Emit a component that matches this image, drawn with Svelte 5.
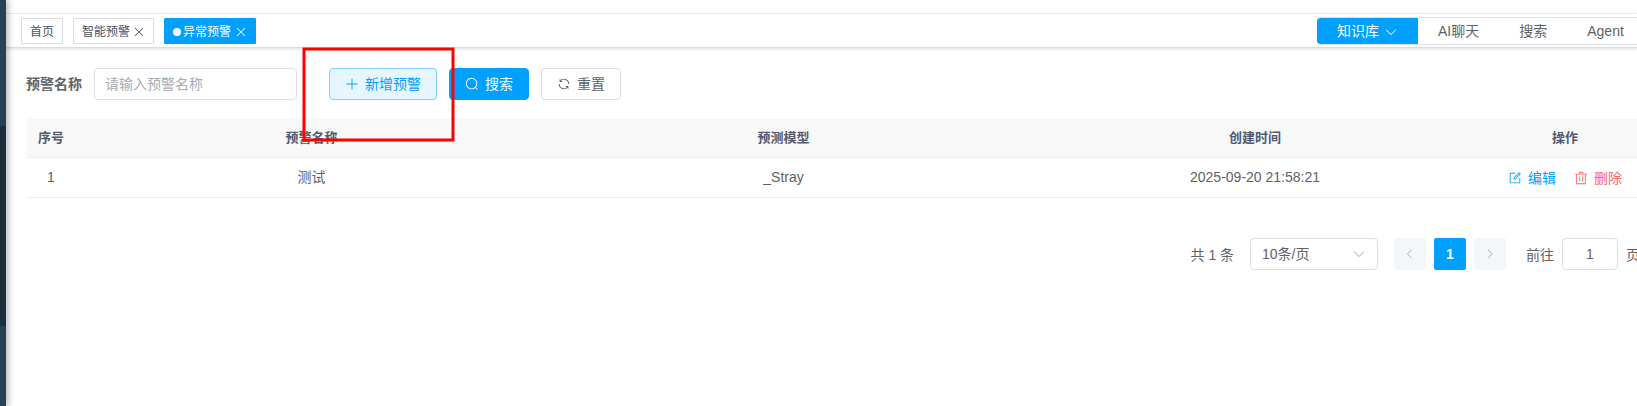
<script>
  const icons = {
    plus: 'M480 480V128a32 32 0 0 1 64 0v352h352a32 32 0 1 1 0 64H544v352a32 32 0 1 1-64 0V544H128a32 32 0 0 1 0-64z',
    search: 'm795.904 750.72 124.992 124.928a32 32 0 0 1-45.248 45.248L750.656 795.904a416 416 0 1 1 45.248-45.248zM480 832a352 352 0 1 0 0-704 352 352 0 0 0 0 704z',
    refresh: 'M771.776 794.88A384 384 0 0 1 128 512h64a320 320 0 0 0 555.712 216.448H654.72a32 32 0 1 1 0-64h149.056a32 32 0 0 1 32 32v148.928a32 32 0 1 1-64 0v-50.56zM276.288 295.616h92.992a32 32 0 0 1 0 64H220.16a32 32 0 0 1-32-32V178.56a32 32 0 0 1 64 0v50.56A384 384 0 0 1 896.128 512h-64a320 320 0 0 0-555.776-216.384z',
    down: 'M831.872 340.864 512 652.672 192.128 340.864a30.592 30.592 0 0 0-42.752 0 29.12 29.12 0 0 0 0 41.6L489.664 714.24a32 32 0 0 0 44.672 0l340.288-331.712a29.12 29.12 0 0 0 0-41.728 30.592 30.592 0 0 0-42.752 0z',
    left: 'M609.408 149.376 277.76 489.6a32 32 0 0 0 0 44.672l331.648 340.352a29.12 29.12 0 0 0 41.728 0 30.592 30.592 0 0 0 0-42.752L339.264 511.936l311.872-319.872a30.592 30.592 0 0 0 0-42.688 29.12 29.12 0 0 0-41.728 0z',
    right: 'M340.864 149.312a30.592 30.592 0 0 0 0 42.752L652.736 512 340.864 831.872a30.592 30.592 0 0 0 0 42.752 29.12 29.12 0 0 0 41.728 0L714.24 534.336a32 32 0 0 0 0-44.672L382.592 149.376a29.12 29.12 0 0 0-41.728 0z',
    close: 'M764.288 214.592 512 466.88 259.712 214.592a31.936 31.936 0 0 0-45.12 45.12L466.752 512 214.528 764.224a31.936 31.936 0 1 0 45.12 45.184L512 557.184l252.288 252.288a31.936 31.936 0 0 0 45.12-45.12L557.12 512.064l252.288-252.352a31.936 31.936 0 1 0-45.12-45.184z',
    trash: 'M160 256H96a32 32 0 0 1 0-64h256V95.936a32 32 0 0 1 32-32h256a32 32 0 0 1 32 32V192h256a32 32 0 1 1 0 64h-64v672a32 32 0 0 1-32 32H192a32 32 0 0 1-32-32V256zm448-64v-64H416v64h192zM224 896h576V256H224v640zm192-128a32 32 0 0 1-32-32V416a32 32 0 0 1 64 0v320a32 32 0 0 1-32 32zm192 0a32 32 0 0 1-32-32V416a32 32 0 0 1 64 0v320a32 32 0 0 1-32 32z',
    edit: 'M832 512a32 32 0 1 1 64 0v352a32 32 0 0 1-32 32H160a32 32 0 0 1-32-32V160a32 32 0 0 1 32-32h352a32 32 0 0 1 0 64H192v640h640V512zM469.952 554.24l52.8-7.552L847.104 222.4a32 32 0 1 0-45.248-45.248L477.44 501.44l-7.552 52.8zm422.4-422.4a96 96 0 0 1 0 135.808l-331.84 331.84a32 32 0 0 1-18.112 9.088L436.8 623.68a32 32 0 0 1-36.224-36.224l15.104-105.6a32 32 0 0 1 9.024-18.112l331.904-331.84a96 96 0 0 1 135.744 0z'
  };

  const rows = [{ index: 1, name: '测试', model: '_Stray', created: '2025-09-20 21:58:21' }];
  const links = ['AI聊天', '搜索', 'Agent'];
</script>

{#snippet icon(name)}
  <svg class="icon" viewBox="0 0 1024 1024" aria-hidden="true"><path d={icons[name]} /></svg>
{/snippet}

<div class="app">
  <aside class="sidebar"><div class="submenu"></div></aside>
  <div class="main">
    <div class="navbar"></div>
    <header class="tabs-bar">
      <nav class="tabs">
        <span class="tab">首页</span>
        <span class="tab">智能预警{@render icon('close')}</span>
        <span class="tab active"><i class="dot"></i>异常预警{@render icon('close')}</span>
      </nav>
      <nav class="links">
        <span class="link current">知识库{@render icon('down')}</span>
        {#each links as link}
          <span class="link">{link}</span>
        {/each}
      </nav>
    </header>

    <main class="content">
      <form class="filters">
        <label for="name">预警名称</label>
        <input id="name" class="field" placeholder="请输入预警名称" />
        <button type="button" class="btn plain">{@render icon('plus')}<span>新增预警</span></button>
        <button type="button" class="btn primary">{@render icon('search')}<span>搜索</span></button>
        <button type="button" class="btn">{@render icon('refresh')}<span>重置</span></button>
      </form>

      <div class="table">
        <div class="row head">
          <span>序号</span><span>预警名称</span><span>预测模型</span><span>创建时间</span><span>操作</span>
        </div>
        {#each rows as row}
          <div class="row">
            <span>{row.index}</span><span>{row.name}</span><span>{row.model}</span><span>{row.created}</span>
            <span class="actions">
              <a class="edit">{@render icon('edit')}编辑</a>
              <a class="delete">{@render icon('trash')}删除</a>
            </span>
          </div>
        {/each}
      </div>

      <div class="pagination">
        <span class="total">共 1 条</span>
        <div class="select"><span>10条/页</span>{@render icon('down')}</div>
        <div class="pager">
          <span class="page off">{@render icon('left')}</span>
          <span class="page on">1</span>
          <span class="page off">{@render icon('right')}</span>
        </div>
        <span class="goto">前往</span>
        <div class="jump">1</div>
        <span class="unit">页</span>
      </div>
    </main>
  </div>
  <svg class="marker" width="156" height="98" viewBox="0 0 156 98" aria-hidden="true">
    <rect x="3" y="3" width="149" height="91" fill="none" stroke="#f00" stroke-width="3" />
  </svg>
</div>

<style>
  :global(body) { margin: 0; overflow: hidden; }
  * { box-sizing: border-box; }
  .app {
    position: relative;
    display: flex;
    width: 1637px;
    height: 406px;
    overflow: hidden;
    background: #fff;
    color: #606266;
    font: 14px/20px "Liberation Sans", "Noto Sans CJK SC", sans-serif;
  }
  .icon { width: 14px; height: 14px; flex: none; fill: currentColor; display: block; }
  .sidebar {
    width: 6px;
    flex: none;
    padding-top: 126px;
    background: #2b4055;
    box-shadow: 2px 0 6px rgba(0, 21, 41, 0.35);
    z-index: 2;
  }
  .submenu { height: 200px; background: #1a2e3c; }
  .main { flex: 1; min-width: 0; display: flex; flex-direction: column; }
  .navbar { height: 14px; flex: none; border-bottom: 1px solid #f2f2f3; }
  .tabs-bar {
    height: 34px;
    flex: none;
    display: flex;
    justify-content: space-between;
    padding: 3px 0 0 15px;
    border-bottom: 1px solid #d8dce5;
    box-shadow: 0 1px 3px rgba(0, 0, 0, 0.12), 0 0 3px rgba(0, 0, 0, 0.04);
  }
  .tabs { display: flex; gap: 10px; padding-top: 1px; }
  .tab {
    display: flex;
    align-items: center;
    height: 26px;
    padding: 2px 8px 0;
    border: 1px solid #d8dce5;
    border-radius: 1px;
    color: #495060;
    font-size: 12px;
    line-height: 22px;
    white-space: nowrap;
  }
  .tab .icon { margin: 0 -1px 0 2px; }
  .tab.active { background: #00a0ff; border-color: #00a0ff; color: #fff; }
  .tab.active .icon { margin-left: 3px; }
  .dot { width: 8px; height: 8px; border-radius: 50%; background: #fff; margin-right: 2px; }
  .links {
    display: flex;
    width: 320px;
    height: 28px;
    border: 1px solid #dfe1e8;
    border-width: 1px 0;
    border-radius: 4px 0 0 4px;
    overflow: hidden;
  }
  .link {
    display: flex;
    flex: none;
    align-items: center;
    padding: 0 20px;
    white-space: nowrap;
  }
  .current { width: 101px; background: #00a0ff; color: #fff; }
  .current .icon { margin: 1px 0 0 5px; }
  .content { padding: 20px 0 0 20px; }
  .filters { display: flex; align-items: center; margin: 0; height: 32px; }
  label { font-weight: 700; margin-right: 12px; }
  .field {
    width: 203px;
    height: 32px;
    padding: 1px 10px;
    margin-right: 32px;
    border: 1px solid #dcdfe6;
    border-radius: 4px;
    font: inherit;
    outline: 0;
  }
  .field::placeholder { color: #a8abb2; opacity: 1; }
  .btn {
    display: flex;
    align-items: center;
    height: 32px;
    padding: 0 15px;
    margin-right: 12px;
    gap: 6px;
    border: 1px solid #dcdfe6;
    border-radius: 4px;
    background: #fff;
    color: #606266;
    font: inherit;
    white-space: nowrap;
  }
  .plain { background: #e6f5ff; border-color: #80cfff; color: #00a0ff; }
  .primary { background: #00a0ff; border-color: #00a0ff; color: #fff; }
  .table { width: 1614px; margin-top: 18px; }
  .row {
    display: grid;
    grid-template-columns: 50px 471px 473px 470px 150px;
    align-items: center;
    height: 40px;
    border-bottom: 1px solid #ebeef5;
    text-align: center;
    line-height: 23px;
  }
  .head { background: #f8f8f9; color: #515a6e; font-size: 13px; font-weight: 700; }
  .actions { display: flex; justify-content: center; gap: 18px; line-height: 20px; }
  .actions a { display: flex; align-items: center; gap: 6px; }
  .edit { color: #00a0ff; }
  .delete { color: #ff6468; }
  .pagination {
    display: flex;
    align-items: center;
    height: 32px;
    margin-top: 40px;
    padding-left: 1164.5px;
    white-space: nowrap;
  }
  .total { width: 59.5px; flex: none; }
  .total, .goto, .unit { padding-top: 2px; }
  .select {
    display: flex;
    flex: none;
    align-items: center;
    justify-content: space-between;
    width: 128px;
    height: 32px;
    padding: 0 11px;
    border: 1px solid #dcdfe6;
    border-radius: 4px;
  }
  .select .icon { color: #a8abb2; }
  .pager { display: flex; gap: 8px; margin: 0 20px 0 16px; }
  .page {
    display: flex;
    align-items: center;
    justify-content: center;
    width: 32px;
    height: 32px;
    border-radius: 2px;
  }
  .page .icon { width: 12px; height: 12px; }
  .off { background: #f4f7fa; color: #a8abb2; }
  .on { background: #00a0ff; color: #fff; font-weight: 700; }
  .goto { width: 36px; flex: none; }
  .jump {
    width: 56px;
    height: 32px;
    flex: none;
    border: 1px solid #dcdfe6;
    border-radius: 4px;
    line-height: 30px;
    text-align: center;
    margin-right: 8px;
  }
  .marker {
    position: absolute;
    left: 301px;
    top: 46px;
    z-index: 3;
    pointer-events: none;
  }
</style>
